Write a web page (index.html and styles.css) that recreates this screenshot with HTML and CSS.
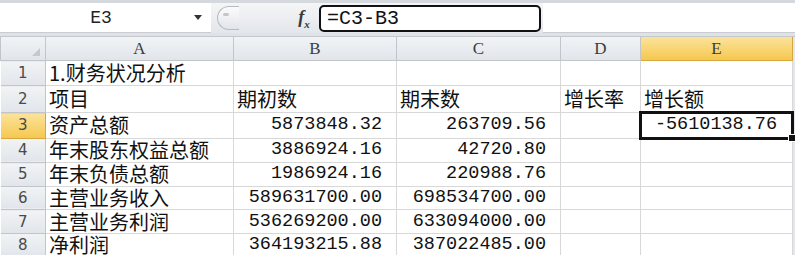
FILE: index.html
```html
<!DOCTYPE html>
<html lang="zh-CN">
<head>
    <meta charset="UTF-8">
    <title>财务状况分析</title>
    <link rel="stylesheet" href="styles.css">
</head>
<body>
    <div class="top-strip"></div>
    <div class="formula-bar">
        <div class="name-box">
            <span class="name-text">E3</span>
            <span class="name-arrow"></span>
        </div>
        <div class="splitter"><span class="splitter-dash"></span></div>
        <div class="fx"><i>f</i><sub>x</sub></div>
        <div class="formula-input">=C3-B3</div>
        <div class="formula-rest"></div>
    </div>
    <div class="bar-gap"></div>

    <table class="sheet">
        <colgroup>
            <col class="c-head">
            <col class="c-a">
            <col class="c-b">
            <col class="c-c">
            <col class="c-d">
            <col class="c-e">
            <col class="c-rest">
        </colgroup>
        <thead>
            <tr class="col-heads">
                <th class="corner"><span class="corner-tri"></span></th>
                <th>A</th>
                <th>B</th>
                <th>C</th>
                <th>D</th>
                <th class="active">E</th>
                <th class="rest"></th>
            </tr>
        </thead>
        <tbody>
            <tr class="r1">
                <th>1</th>
                <td class="txt">1.财务状况分析</td>
                <td></td><td></td><td></td><td></td><td class="rest"></td>
            </tr>
            <tr class="r2">
                <th>2</th>
                <td class="txt">项目</td>
                <td class="txt">期初数</td>
                <td class="txt">期末数</td>
                <td class="txt">增长率</td>
                <td class="txt">增长额</td>
                <td class="rest"></td>
            </tr>
            <tr>
                <th class="active">3</th>
                <td class="txt">资产总额</td>
                <td class="num">5873848.32</td>
                <td class="num">263709.56</td>
                <td></td>
                <td class="num selected">-5610138.76<span class="handle"></span></td>
                <td class="rest"></td>
            </tr>
            <tr>
                <th>4</th>
                <td class="txt">年末股东权益总额</td>
                <td class="num">3886924.16</td>
                <td class="num">42720.80</td>
                <td></td><td></td><td class="rest"></td>
            </tr>
            <tr>
                <th>5</th>
                <td class="txt">年末负债总额</td>
                <td class="num">1986924.16</td>
                <td class="num">220988.76</td>
                <td></td><td></td><td class="rest"></td>
            </tr>
            <tr>
                <th>6</th>
                <td class="txt">主营业务收入</td>
                <td class="num">589631700.00</td>
                <td class="num">698534700.00</td>
                <td></td><td></td><td class="rest"></td>
            </tr>
            <tr>
                <th>7</th>
                <td class="txt">主营业务利润</td>
                <td class="num">536269200.00</td>
                <td class="num">633094000.00</td>
                <td></td><td></td><td class="rest"></td>
            </tr>
            <tr>
                <th>8</th>
                <td class="txt">净利润</td>
                <td class="num">364193215.88</td>
                <td class="num">387022485.00</td>
                <td></td><td></td><td class="rest"></td>
            </tr>
        </tbody>
    </table>
</body>
</html>
```

FILE: styles.css
```css
body {
    margin: 0;
    background: #ffffff;
    font-family: "Noto Sans CJK SC", sans-serif;
    overflow: hidden;
}

.top-strip {
    height: 3px;
    background: #d5d8dc;
}

.formula-bar {
    display: flex;
    height: 30px;
    background: linear-gradient(to bottom, #f4f5f7, #e3e6ea);
}

.name-box {
    width: 211px;
    display: flex;
    align-items: center;
    background: #ffffff;
    border-bottom: 1px solid #c9ccd1;
    box-sizing: border-box;
}

.name-text {
    flex: 1;
    text-align: center;
    font-family: "Liberation Mono", monospace;
    font-size: 18px;
    color: #222;
    padding-left: 8px;
}

.name-arrow {
    width: 0;
    height: 0;
    margin-right: 9px;
    border-left: 4px solid transparent;
    border-right: 4px solid transparent;
    border-top: 5px solid #333;
}

.splitter {
    width: 22px;
    height: 24px;
    margin: 3px 0 0 6px;
    border: 1px solid #b6bac0;
    border-right: none;
    border-radius: 12px 0 0 12px;
    background: linear-gradient(to bottom, #fbfbfc, #e2e5e9);
    box-sizing: border-box;
}

.splitter-dash {
    display: block;
    width: 6px;
    height: 3px;
    margin: 6px 0 0 5px;
    background: #c3c7cc;
    border-radius: 2px;
}

.fx {
    width: 30px;
    margin-left: 50px;
    padding-top: 4px;
    font-family: "Liberation Serif", serif;
    font-size: 18px;
    font-weight: bold;
    color: #3a3a3a;
    text-align: center;
}

.fx sub {
    font-size: 11px;
    font-style: italic;
}

.formula-input {
    width: 222px;
    height: 27px;
    margin-top: 2px;
    padding-left: 6px;
    border: 2px solid #111;
    border-radius: 5px;
    background: #ffffff;
    box-sizing: border-box;
    font-family: "Liberation Mono", monospace;
    font-size: 20px;
    line-height: 23px;
    color: #111;
}

.formula-rest {
    flex: 1;
    margin-left: 2px;
    background: #ffffff;
    border-bottom: 1px solid #c9ccd1;
}

.bar-gap {
    height: 3px;
    background: #dfe2e6;
    border-bottom: 1px solid #c4c8cd;
}

.sheet {
    border-collapse: collapse;
    table-layout: fixed;
    width: 795px;
}

.c-head { width: 45px; }
.c-a { width: 188px; }
.c-b { width: 163px; }
.c-c { width: 164px; }
.c-d { width: 80px; }
.c-e { width: 152px; }
.c-rest { width: 3px; }

.sheet th {
    background: linear-gradient(to bottom, #f1f3f5, #e1e5ea);
    border: 1px solid #c2c6cc;
    font-family: "Liberation Serif", serif;
    font-weight: normal;
    font-size: 17px;
    color: #3c3c3c;
    padding: 0;
}

.col-heads th {
    height: 23px;
    border-top: none;
}

.sheet tbody th {
    font-family: "DejaVu Sans", sans-serif;
    font-size: 15px;
    color: #4a4a4a;
    border-left: none;
}

.sheet th.active {
    background: linear-gradient(to bottom, #fbe39b, #f5c74f);
    border-color: #d6a73e;
}

.corner {
    position: relative;
}

.corner-tri {
    position: absolute;
    right: 5px;
    bottom: 4px;
    width: 0;
    height: 0;
    border-left: 8px solid transparent;
    border-bottom: 8px solid #c5c9ce;
}

.sheet td {
    height: 22.6px;
    border: 1px solid #d8d8d8;
    padding: 0 2px 0 3px;
    white-space: nowrap;
    color: #111;
}

.sheet tbody th {
    height: 22.6px;
}

.sheet tr.r1 td,
.sheet tr.r1 th {
    height: 24px;
}

.sheet tr.r2 td,
.sheet tr.r2 th {
    height: 25px;
}

.txt {
    font-size: 20px;
    line-height: 20px;
}

.num {
    text-align: right;
    font-family: "Liberation Mono", monospace;
    font-size: 18.5px;
    line-height: 20px;
}

.sheet td.num {
    padding-right: 14px;
}

.sheet td.rest,
.sheet th.rest {
    background: #e3e6ea;
    border: none;
}

.sheet td.selected {
    position: relative;
    border: 3px solid #111;
    padding-right: 14px;
}

.handle {
    position: absolute;
    right: -5px;
    bottom: -5px;
    width: 6px;
    height: 6px;
    background: #111;
    border: 1px solid #ffffff;
}
```
